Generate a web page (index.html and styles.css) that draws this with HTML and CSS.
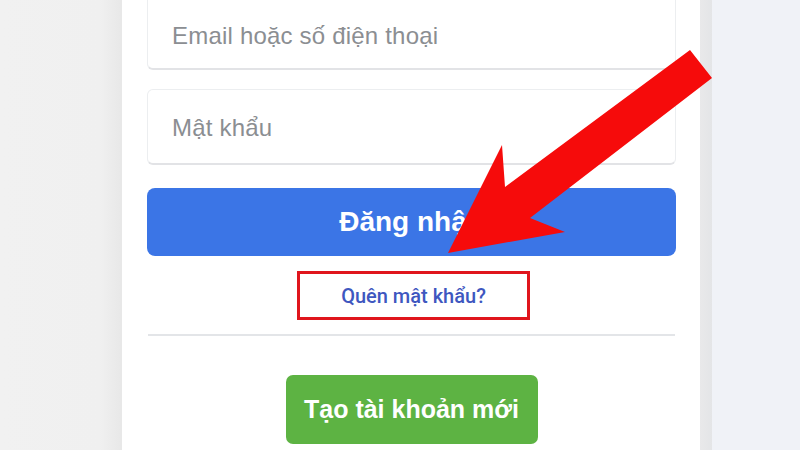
FILE: index.html
```html
<!DOCTYPE html>
<html lang="vi">
<head>
<meta charset="utf-8">
<title>Đăng nhập</title>
<link rel="stylesheet" href="styles.css">
</head>
<body>
<div class="page">
  <div class="side-left"></div>
  <main class="card">
    <div class="field field-first"><span class="ph">Email hoặc số điện thoại</span></div>
    <div class="field field-second"><span class="ph">Mật khẩu</span></div>
    <button class="btn-login">Đăng nhập</button>
    <div class="forgot-wrap"><a class="forgot" href="#">Quên mật khẩu?</a></div>
    <hr class="divider">
    <button class="btn-create">Tạo tài khoản mới</button>
  </main>
  <div class="side-edge"></div>
  <div class="side-right"></div>
</div>
<svg class="arrow" width="800" height="450" viewBox="0 0 800 450" aria-hidden="true">
  <polygon points="690,50 712,78 530,218 565,232 448,253 502,145 505,187" fill="#f60b0b"/>
</svg>
</body>
</html>
```

FILE: styles.css
```css
html, body {
  margin: 0;
  padding: 0;
  width: 800px;
  height: 450px;
  overflow: hidden;
  font-family: "Liberation Sans", Arial, sans-serif;
}

.page {
  display: grid;
  grid-template-columns: 122px 578px 12px 1fr;
  height: 450px;
}

.side-left {
  background: linear-gradient(to right, #f1f1f1 0, #f0f0f0 100px, #e8e8e8 121px);
}

.side-edge {
  background: linear-gradient(to right, #e9e9ea, #e4e5e7);
}

.side-right {
  background: #f0f2f7;
}

.card {
  background: #ffffff;
  padding: 0 24px 0 25px;
  display: flex;
  flex-direction: column;
  align-items: center;
}

.field {
  box-sizing: border-box;
  width: 529px;
  height: 76px;
  border: 1px solid #eceef0;
  border-bottom: 2px solid #e2e3e6;
  border-radius: 6px;
  display: flex;
  align-items: center;
  padding-left: 24px;
  flex-shrink: 0;
}

.field-first {
  margin-top: -6px;
  padding-top: 9px;
}

.field-second {
  margin-top: 19px;
  padding-top: 2px;
}

.ph {
  font-size: 24px;
  color: #8b8e92;
  letter-spacing: 0.2px;
}

.btn-login {
  margin-top: 23px;
  width: 529px;
  height: 68px;
  border: none;
  border-radius: 8px;
  background: #3b75e6;
  color: #ffffff;
  font-family: "Liberation Sans", Arial, sans-serif;
  font-size: 28px;
  font-weight: bold;
  flex-shrink: 0;
}

.forgot-wrap {
  box-sizing: border-box;
  margin-top: 15px;
  margin-left: 4px;
  width: 233px;
  height: 49px;
  border: 3px solid #e0151d;
  display: flex;
  align-items: center;
  justify-content: center;
  flex-shrink: 0;
}

.forgot {
  font-family: Roboto, "Liberation Sans", sans-serif;
  font-weight: 500;
  font-size: 20px;
  color: #3e57c0;
  text-decoration: none;
  padding-top: 1px;
}

.divider {
  margin: 14px 0 0 0;
  width: 527px;
  height: 0;
  border: none;
  border-top: 2px solid #e3e5e8;
  flex-shrink: 0;
}

.btn-create {
  margin-top: 39px;
  width: 252px;
  height: 69px;
  border: none;
  border-radius: 7px;
  background: #5db343;
  color: #ffffff;
  font-family: "Liberation Sans", Arial, sans-serif;
  font-size: 25px;
  font-weight: bold;
  flex-shrink: 0;
}

.arrow {
  position: absolute;
  left: 0;
  top: 0;
  pointer-events: none;
}
```
